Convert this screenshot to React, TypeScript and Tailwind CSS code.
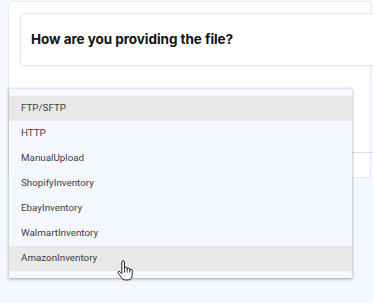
import React from "react";

const items = [
  "FTP/SFTP",
  "HTTP",
  "ManualUpload",
  "ShopifyInventory",
  "EbayInventory",
  "WalmartInventory",
  "AmazonInventory",
];

export default function App() {
  return (
    <div className="relative w-[373px] h-[303px] overflow-hidden bg-[#f4f7fd]" style={{ fontFamily: "Roboto, 'Liberation Sans', sans-serif" }}>
      <div className="ml-[8px] mt-[1px] w-[363px] h-[177px] bg-white rounded-[4px] border border-[#e8ebf1] pt-[11px] pl-[11px]">
        <div className="w-[370px] h-[53px] bg-white rounded-[4px] border border-[#e3e6ec] shadow-[0_1px_2px_rgba(0,0,0,0.06)] flex items-center pl-[10px] pb-[1px]">
          <span className="text-[13.5px] font-bold text-[#111] tracking-[-0.05px]" style={{ fontFamily: "Inter, 'Liberation Sans', sans-serif" }}>
            How are you providing the file?
          </span>
        </div>
        <div className="mt-[86px] w-[370px] h-0 border-b border-[#dcdfe6]" />
      </div>

      <div className="absolute left-[9px] top-[88px] w-[343px] bg-[#f5f8ff] pt-[7px] pb-[7px] shadow-[0_1px_3px_rgba(0,0,0,0.35)] border-t border-[#dce5fa]">
        {items.map((it, i) => (
          <div
            key={it}
            className={`h-[25px] flex items-center pl-[12px] text-[9.8px] text-[#404040] ${i === 0 || i === 6 ? "bg-[#e9e9ea]" : ""}`}
          >
            {it}
          </div>
        ))}
      </div>

      <svg className="absolute left-[117px] top-[260px]" width="16" height="21" viewBox="0 0 15 20">
        <path
          d="M4.5 10 V2 a1.25 1.25 0 0 1 2.5 0 V8 a1.25 1.25 0 0 1 2.5 0 V9 a1.25 1.25 0 0 1 2.5 0 V10 a1.2 1.2 0 0 1 2.4 0 V14 c0 3 -1.5 5 -4 5 H8 c-2 0 -3 -1 -4 -2.5 L1 12.5 a1.1 1.1 0 0 1 1.8 -1.3 L4.5 13 Z"
          fill="#fff"
          stroke="#111"
          strokeWidth="0.9"
          strokeLinejoin="round"
        />
        <path d="M7 8 V12 M9.5 9 V12 M12 10 V12" stroke="#111" strokeWidth="0.8" />
      </svg>
    </div>
  );
}
